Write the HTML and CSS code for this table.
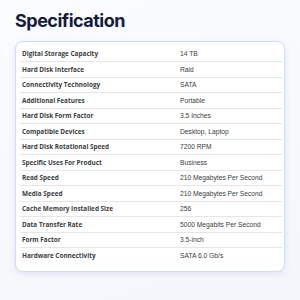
FILE: index.html
```html
<!DOCTYPE html>
<html>
<head>
<meta charset="utf-8">
<link rel="stylesheet" href="styles.css">
</head>
<body>
<div class="page">
  <h1 class="title">Specification</h1>
  <div class="card">
    <table class="spec">
      <tr><th>Digital Storage Capacity</th><td>14 TB</td></tr>
      <tr><th>Hard Disk Interface</th><td>Raid</td></tr>
      <tr><th>Connectivity Technology</th><td>SATA</td></tr>
      <tr><th>Additional Features</th><td>Portable</td></tr>
      <tr><th>Hard Disk Form Factor</th><td>3.5 Inches</td></tr>
      <tr><th>Compatible Devices</th><td>Desktop, Laptop</td></tr>
      <tr><th>Hard Disk Rotational Speed</th><td>7200 RPM</td></tr>
      <tr><th>Specific Uses For Product</th><td>Business</td></tr>
      <tr><th>Read Speed</th><td>210 Megabytes Per Second</td></tr>
      <tr><th>Media Speed</th><td>210 Megabytes Per Second</td></tr>
      <tr><th>Cache Memory Installed Size</th><td>256</td></tr>
      <tr><th>Data Transfer Rate</th><td>5000 Megabits Per Second</td></tr>
      <tr><th>Form Factor</th><td>3.5-inch</td></tr>
      <tr><th>Hardware Connectivity</th><td>SATA 6.0 Gb/s</td></tr>
    </table>
  </div>
</div>
</body>
</html>
```
FILE: styles.css
```css
html, body {
  margin: 0;
  padding: 0;
}
body {
  width: 300px;
  height: 300px;
  background: linear-gradient(160deg, #fbfcfe 0%, #f4f6fb 100%);
  font-family: "Open Sans", sans-serif;
}
.page {
  padding: 8px 15px 0 15px;
}
.title {
  margin: 0;
  font-family: Inter, sans-serif;
  font-weight: 700;
  font-size: 18px;
  line-height: 26px;
  color: #151b3b;
  letter-spacing: -0.5px;
}
.card {
  margin-top: 7px;
  background: #ffffff;
  border: 1px solid #d3dcf2;
  border-radius: 8px;
  box-shadow: 0 2px 6px rgba(120, 140, 200, 0.18);
  padding: 4px 2px 8px 4px;
}
.spec {
  width: 100%;
  border-collapse: collapse;
}
.spec tr {
  height: 15.5px;
}
.spec tr + tr {
  border-top: 1px solid #e4e6ea;
}
.spec th {
  text-align: left;
  padding: 0 0 0 2px;
  width: 158px;
  font-family: "Open Sans", sans-serif;
  font-weight: 700;
  font-size: 6.4px;
  color: #3a3d42;
}
.spec td {
  padding: 0;
  font-family: "Liberation Sans", Arial, sans-serif;
  font-size: 6.7px;
  color: #3a3d42;
}
```
